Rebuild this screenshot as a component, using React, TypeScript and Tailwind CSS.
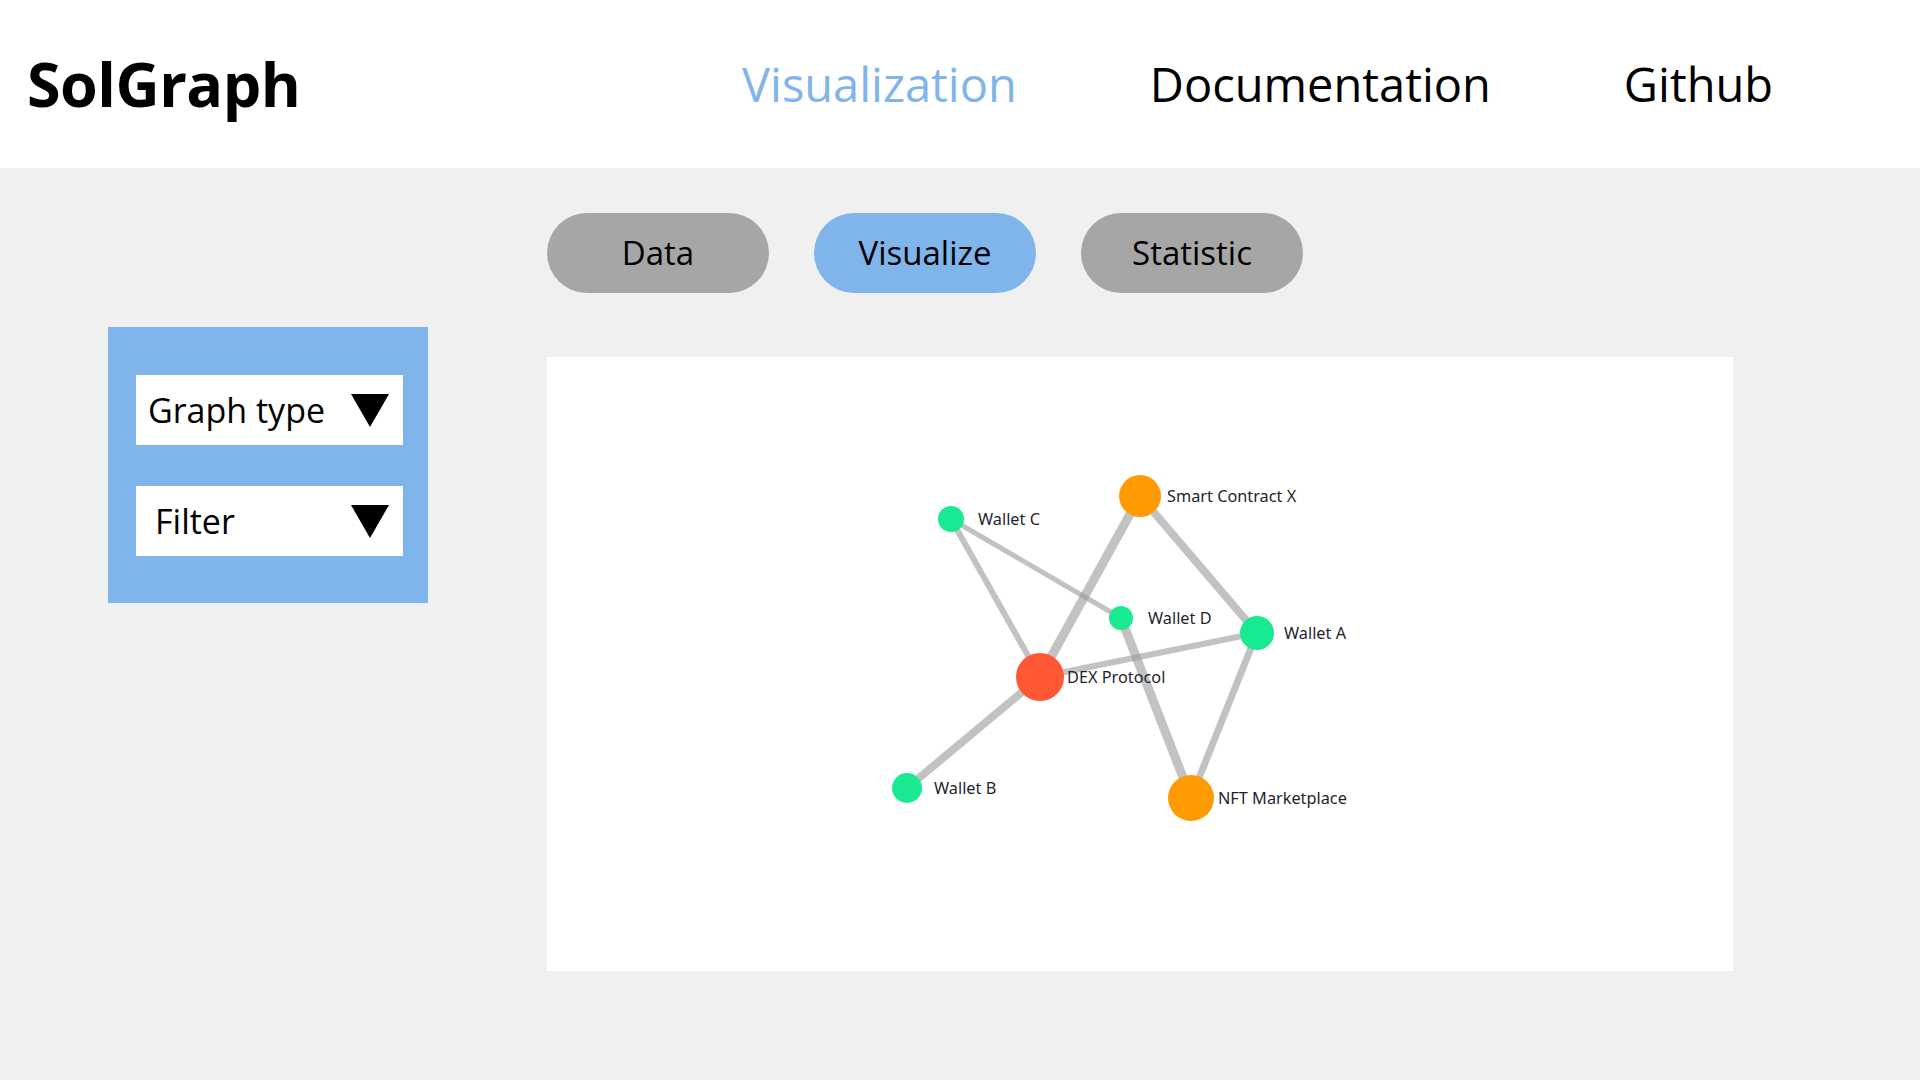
import React from "react";

type GNode = { id: string; x: number; y: number; r: number; color: string };

const ORANGE = "#ff9a00";
const GREEN = "#19ea92";
const RED = "#ff5733";

const nodes: GNode[] = [
  { id: "Smart Contract X", x: 593, y: 139, r: 21, color: ORANGE },
  { id: "Wallet C", x: 404, y: 162, r: 13, color: GREEN },
  { id: "Wallet D", x: 574, y: 261, r: 12, color: GREEN },
  { id: "Wallet A", x: 710, y: 276, r: 17, color: GREEN },
  { id: "DEX Protocol", x: 493, y: 320, r: 24, color: RED },
  { id: "Wallet B", x: 360, y: 431, r: 15, color: GREEN },
  { id: "NFT Marketplace", x: 644, y: 441, r: 23, color: ORANGE },
];

const links: [string, string, number][] = [
  ["Wallet C", "DEX Protocol", 6],
  ["Wallet C", "Wallet D", 5],
  ["Smart Contract X", "DEX Protocol", 9],
  ["Smart Contract X", "Wallet A", 8],
  ["DEX Protocol", "Wallet A", 6],
  ["Wallet D", "NFT Marketplace", 9],
  ["Wallet A", "NFT Marketplace", 7],
  ["DEX Protocol", "Wallet B", 8],
];

const byId = (id: string) => nodes.find((n) => n.id === id)!;

function Caret() {
  return (
    <svg width="38" height="33" viewBox="0 0 38 33">
      <polygon points="0,0 38,0 19,33" fill="#000" />
    </svg>
  );
}

function Dropdown({ label, textPad }: { label: string; textPad: string }) {
  return (
    <div className="flex items-center justify-between w-[267px] h-[70px] bg-white pr-[14px]">
      <span className={`${textPad} text-[34px] text-black leading-none`}>
        {label}
      </span>
      <Caret />
    </div>
  );
}

function Graph() {
  return (
    <svg width="1186" height="614" viewBox="0 0 1186 614">
      <g stroke="#999" strokeOpacity="0.6">
        {links.map(([s, t, w]) => {
          const a = byId(s);
          const b = byId(t);
          return (
            <line
              key={s + t}
              x1={a.x}
              y1={a.y}
              x2={b.x}
              y2={b.y}
              strokeWidth={w}
            />
          );
        })}
      </g>
      {nodes.map((n) => (
        <g key={n.id}>
          <circle cx={n.x} cy={n.y} r={n.r} fill={n.color} />
          <text
            x={n.x + 27}
            y={n.y}
            dominantBaseline="central"
            fontSize="16.3"
            fill="#1f1f2e"
            style={{ fontFamily: '"Noto Sans", "Open Sans", sans-serif' }}
          >
            {n.id}
          </text>
        </g>
      ))}
    </svg>
  );
}

export default function App() {
  const tabs = ["Data", "Visualize", "Statistic"];
  return (
    <div
      className="w-[1920px] h-[1080px] bg-[#f0f0f0] flex flex-col overflow-hidden"
      style={{ fontFamily: '"Open Sans", "Noto Sans", sans-serif' }}
    >
      {/* Header */}
      <header className="h-[168px] bg-white flex items-center shrink-0">
        <div className="w-[742px] pl-[27px]">
          <span className="text-[61px] font-bold text-black tracking-[-0.5px]">
            SolGraph
          </span>
        </div>
        <nav className="flex items-center gap-[133px] text-[47px]">
          <a className="text-[#7fb5ea]">Visualization</a>
          <a className="text-black">Documentation</a>
          <a className="text-black">Github</a>
        </nav>
      </header>

      {/* Body */}
      <div className="flex flex-1">
        <aside className="pl-[108px] pt-[159px]">
          <div className="w-[320px] h-[276px] bg-[#7fb5ea] flex flex-col gap-[41px] pt-[48px] pl-[28px]">
            <Dropdown label="Graph type" textPad="pl-[12px]" />
            <Dropdown label="Filter" textPad="pl-[19px]" />
          </div>
        </aside>

        <main className="ml-[119px] pt-[45px] flex flex-col">
          <div className="flex gap-[45px]">
            {tabs.map((t) => (
              <button
                key={t}
                className={`w-[222px] h-[80px] rounded-full text-[33px] text-black ${
                  t === "Visualize" ? "bg-[#7fb5ea]" : "bg-[#a6a6a6]"
                }`}
              >
                {t}
              </button>
            ))}
          </div>
          <div className="mt-[64px] w-[1186px] h-[614px] bg-white">
            <Graph />
          </div>
        </main>
      </div>
    </div>
  );
}
